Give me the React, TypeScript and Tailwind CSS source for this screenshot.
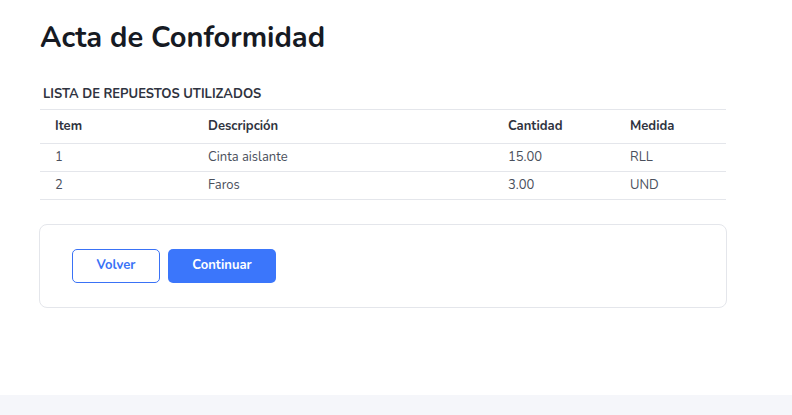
const rows = [
  { item: '1', desc: 'Cinta aislante', cant: '15.00', medida: 'RLL' },
  { item: '2', desc: 'Faros', cant: '3.00', medida: 'UND' },
];

export default function App() {
  return (
    <div className="min-h-[415px] bg-[#f5f6fa] font-['Nunito','Lato',sans-serif]">
      <div className="h-[395px] bg-white px-10 pt-[19px]">
        <h1 className="text-[29px] font-bold leading-[38px] text-[#161a23]">Acta de Conformidad</h1>

        <div className="mt-[28px] w-[686px]">
          <div className="pl-[3px] text-[13px] font-bold leading-[18px] text-[#2f3340]">LISTA DE REPUESTOS UTILIZADOS</div>
          <table className="mt-[6px] w-full border-collapse text-[13px] text-left">
            <thead>
              <tr className="h-[34px] border-y border-[#e4e6eb]">
                <th className="w-[153px] pl-[15px] font-bold text-[#2f3340]">Item</th>
                <th className="w-[300px] pl-[15px] font-bold text-[#2f3340]">Descripción</th>
                <th className="w-[122px] pl-[15px] font-bold text-[#2f3340]">Cantidad</th>
                <th className="pl-[15px] font-bold text-[#2f3340]">Medida</th>
              </tr>
            </thead>
            <tbody>
              {rows.map((r) => (
                <tr key={r.item} className="h-[28px] border-b border-[#e4e6eb] text-[#4a4f5c]">
                  <td className="pl-[15px]">{r.item}</td>
                  <td className="pl-[15px]">{r.desc}</td>
                  <td className="pl-[15px]">{r.cant}</td>
                  <td className="pl-[15px]">{r.medida}</td>
                </tr>
              ))}
            </tbody>
          </table>
        </div>

        <div className="mt-[24px] flex h-[84px] w-[688px] -ml-px items-center gap-2 rounded-lg border border-[#e4e6eb] px-8">
          <button className="h-[34px] w-[88px] rounded-[5px] border border-[#3a72f6] bg-white text-[13px] font-bold text-[#3a72f6]">
            Volver
          </button>
          <button className="h-[34px] w-[108px] rounded-[5px] bg-[#3b76fb] text-[13px] font-bold text-white">
            Continuar
          </button>
        </div>
      </div>
    </div>
  );
}
